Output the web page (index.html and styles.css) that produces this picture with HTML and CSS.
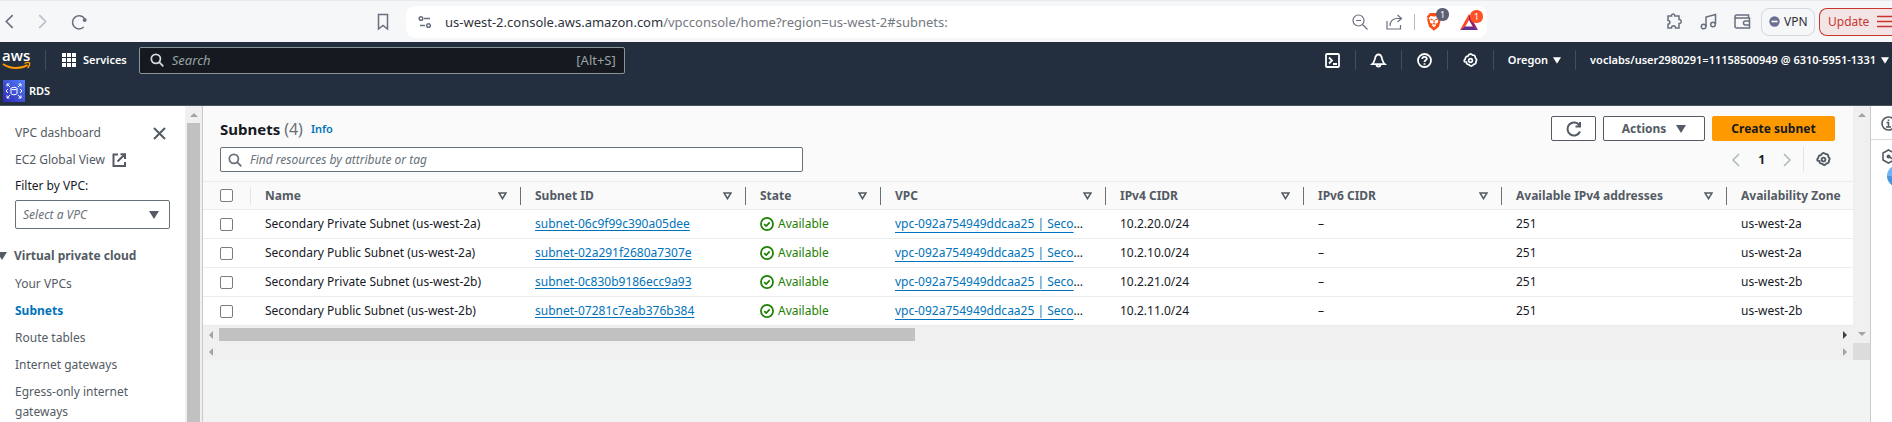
FILE: index.html
```html
<!DOCTYPE html>
<html lang="en">
<head>
<meta charset="utf-8">
<title>Subnets | VPC Console</title>
<link rel="stylesheet" href="styles.css">
</head>
<body>
<svg class="defs" aria-hidden="true">
  <symbol id="gear" viewBox="0 0 16 16"><path d="M6.600 1.600 8 1l1.400.6 1 .7 1.500.1 1 1.100.2 1.500 1 1.200.5 1.500-.8 1.400 0 1.500-1.100 1.200-1.400.4-.9 1-1.500.8-1.500-.7-1.100-.9-1.500-.3-1-1.100-.1-1.500L1.600 9.300 1.300 7.700 2.400 6.400l.3-1.500 1-1.200 1.500-.3z"/><circle cx="8" cy="8" r="2"/></symbol>
  <symbol id="caret" viewBox="0 0 10 8"><path d="M0 0h10L5 8z"/></symbol>
  <symbol id="sort" viewBox="0 0 10 9"><path d="M1.200 1.200h7.600L5 7.400z"/></symbol>
  <symbol id="ok" viewBox="0 0 16 16"><circle cx="8" cy="8" r="6.900"/><path d="m4.800 8.200 2.300 2.200 4-4.300"/></symbol>
  <symbol id="lens" viewBox="0 0 16 16"><circle cx="6.700" cy="6.700" r="5.200"/><path d="m10.500 10.500 4.700 4.700"/></symbol>
  <symbol id="chev-l" viewBox="0 0 8 14"><path d="M7 1 1 7l6 6"/></symbol>
  <symbol id="chev-r" viewBox="0 0 8 14"><path d="m1 1 6 6-6 6"/></symbol>
</svg>

<div class="browser">
  <button class="bare" aria-label="Back"><svg class="line b-nav" width="9" height="15"><use href="#chev-l"/></svg></button>
  <button class="bare" aria-label="Forward"><svg class="line b-nav dim" width="9" height="15"><use href="#chev-r"/></svg></button>
  <button class="bare" aria-label="Reload"><svg class="line" width="17" height="16" viewBox="0 0 17 16"><path d="M12.800 13a6.600 6.600 0 1 1 .5-8.800"/><circle class="dot" cx="13.700" cy="6" r="2"/></svg></button>
  <button class="bare bookmark" aria-label="Bookmark"><svg class="line" width="12" height="18" viewBox="0 0 12 18"><path d="M1.500 1.500h9v14.500L6 12.500 1.500 16z"/></svg></button>
  <div class="address">
    <svg class="line tune" width="14" height="14" viewBox="0 0 14 14"><circle cx="3" cy="3.500" r="1.800"/><path d="M6 3.500h6M2 10.500h5"/><circle cx="10.500" cy="10.500" r="1.800"/></svg>
    <span class="url">us-west-2.console.aws.amazon.com<span class="path">/vpcconsole/home?region=us-west-2#subnets:</span></span>
    <button class="bare" aria-label="Zoom out"><svg class="line thin" width="16" height="16" viewBox="0 0 16 16"><circle cx="6.500" cy="6.500" r="5.500"/><path d="m10.500 10.500 5 5M4 6.500h5"/></svg></button>
    <button class="bare share" aria-label="Share"><svg class="line thin" width="17" height="16" viewBox="0 0 17 16"><path d="M1 7v8h13.500v-4M4 12c0-5 3-7.500 7-7.500h4M11.500 1l4 3.500-4 3.500"/></svg></button>
    <span class="rule"></span>
    <button class="bare badged shield" aria-label="Brave Shields"><svg width="16" height="19" viewBox="0 0 16 19"><path fill="#fb4e14" d="M4 1h8l1.500 1.700 1.500 1.500-.5 2 .3 1.800-1.900 6.800L8 18.800l-4.900-4L1.200 8l.3-1.800-.5-2L2.500 2.700z"/><path fill="#fff" d="M4.500 4 8 4.600 11.500 4l1.700 2.300-1 2-.2 2.200-2 1.200-.2 2L8 15.200 6.200 13.700l-.2-2-2-1.200-.2-2.200-1-2z"/><path stroke="#fb4e14" stroke-width="1.200" fill="none" d="m4.500 7.200 2.200.6M11.500 7.200l-2.200.6M8 8v2.500M6.500 12.200 8 11.400l1.500.8"/></svg><span class="badge slate">1</span></button>
    <button class="bare badged rewards" aria-label="Brave Rewards"><svg width="18" height="16" viewBox="0 0 18 16"><path fill="#ff4724" d="M9 0 0 16l5-3L9 6z"/><path fill="#9e1f63" d="m9 0 9 16-5-3-4-7z"/><path fill="#662d91" d="M0 16h18l-5-3.500H5z"/></svg><span class="badge red">1</span></button>
  </div>
  <div class="extensions">
    <button class="bare" aria-label="Extensions"><svg class="line" width="17" height="17" viewBox="0 0 17 17"><path d="M2 3h3.500C5 1 8.500 0 8.800 3H13v3.500c3-.3 3 4.200 0 4V15H9.500c0-3-4-3-4 0H2v-3.800c2.600-.2 2.600-3.600 0-3.700z"/></svg></button>
    <button class="bare" aria-label="Media"><svg class="line" width="17" height="17" viewBox="0 0 17 17"><path d="M6 13.500V4l9.500-2.500V11"/><circle cx="3.600" cy="13.500" r="2.300"/><circle cx="13" cy="11.500" r="2.300"/></svg></button>
    <button class="bare" aria-label="Wallet"><svg class="line" width="17" height="15" viewBox="0 0 17 15"><path d="M14.500 4V1H2.500a1.500 1.500 0 0 0 0 3H15.500V14H3a1.800 1.800 0 0 1-2-2V2.500M15.500 7h-4a1.700 1.700 0 0 0 0 4h4"/></svg></button>
  </div>
  <button class="pill"><svg width="11" height="11" viewBox="0 0 11 11"><circle cx="5.500" cy="5.500" r="5.200" fill="#6b6f93"/><path d="M2.500 5.500h6" stroke="#fff" stroke-width="1.600"/></svg>VPN</button>
  <button class="pill update">Update<svg width="15" height="13" viewBox="0 0 15 13"><path d="M0 1.500h15M0 6.500h15M0 11.500h15" stroke="#c9362f" stroke-width="1.400"/></svg></button>
</div>

<header class="console">
  <nav class="topnav">
    <a class="logo" href="#" aria-label="AWS home"><svg width="30" height="22" viewBox="0 0 30 22"><text class="logo-word" x="0" y="12">aws</text><path d="M1 15c8 5.500 18 5 24.500 1" fill="none" stroke="#f90" stroke-width="2"/><path d="M22.500 14.300c2.500-1 4.500-1 5-.3.400.8-.3 3-1.800 5" fill="none" stroke="#f90" stroke-width="1.400"/></svg></a>
    <span class="sep"></span>
    <button class="bare services"><svg width="14" height="14" viewBox="0 0 14 14"><path fill="#fff" d="M0 0h4v4H0zM5 0h4v4H5zM10 0h4v4h-4zM0 5h4v4H0zM5 5h4v4H5zM10 5h4v4h-4zM0 10h4v4H0zM5 10h4v4H5zM10 10h4v4h-4z"/></svg>Services</button>
    <label class="search"><svg class="line" width="14" height="14"><use href="#lens"/></svg><input type="text" placeholder="Search" aria-label="Search"><kbd>[Alt+S]</kbd></label>
    <div class="tools">
      <button class="bare" aria-label="CloudShell"><svg class="line" width="15" height="15" viewBox="0 0 15 15"><rect x="1" y="1" width="13" height="13" rx="1"/><path d="m4 4.500 3 3-3 3M8 11h4"/></svg></button>
      <button class="bare" aria-label="Notifications"><svg class="line" width="15" height="15" viewBox="0 0 15 15"><path d="M1.200 11.200C3.500 9 3.500 7.500 4 5.500c.5-2.300 1.700-4 3.500-4s3 1.700 3.500 4c.5 2 .5 3.500 2.800 5.700zM5.500 11.500a2 2 0 0 0 4 0"/></svg></button>
      <button class="bare" aria-label="Help"><svg class="line" width="15" height="15" viewBox="0 0 15 15"><circle cx="7.500" cy="7.500" r="6.500"/><path d="M5.200 6c0-3 4.600-2.800 4.600-.2C9.800 7.500 7.500 7.200 7.500 9M7.500 10.200v1.600"/></svg></button>
      <button class="bare" aria-label="Settings"><svg class="line" width="15" height="15"><use href="#gear"/></svg></button>
      <button class="bare region">Oregon<svg class="solid" width="8" height="7"><use href="#caret"/></svg></button>
      <button class="bare account">voclabs/user2980291=11158500949 @ 6310-5951-1331<svg class="solid" width="8" height="7"><use href="#caret"/></svg></button>
    </div>
  </nav>
  <a class="favorite" href="#"><svg width="22" height="22" viewBox="0 0 22 22"><defs><linearGradient id="rds" x1="0" y1="1" x2="1" y2="0"><stop offset="0" stop-color="#2e27ad"/><stop offset="1" stop-color="#527fff"/></linearGradient></defs><path fill="url(#rds)" d="M0 0h22v22H0z"/><g fill="none" stroke="#fff"><path d="M7 7 4 4m0 2.500V4h2.500M15 7l3-3m-2.500 0H18v2.500M7 15l-3 3m0-2.500V18h2.500M15 15l3 3m0-2.500V18h-2.500M5 9l-2 2 2 2M17 9l2 2-2 2"/><ellipse cx="11" cy="8.500" rx="3" ry="1.200"/><path d="M8 8.500v5c0 1.600 6 1.600 6 0v-5"/></g></svg>RDS</a>
</header>

<div class="workspace">
  <aside class="sidebar">
    <div class="side-scroll">
      <div class="side-top">
        <a href="#">VPC dashboard</a>
        <button class="bare" aria-label="Close"><svg class="line" width="13" height="13" viewBox="0 0 13 13"><path d="m1 1 11 11M12 1 1 12"/></svg></button>
      </div>
      <a class="side-link" href="#">EC2 Global View<svg class="line" width="14" height="14" viewBox="0 0 14 14"><path d="M6 1.500H1.500V13H13V9M8.500 1.200H13V6M13 1.200 5.500 8.500"/></svg></a>
      <label class="filter-label" for="vpc">Filter by VPC:</label>
      <div class="select"><select id="vpc"><option>Select a VPC</option></select><svg class="solid" width="10" height="8"><use href="#caret"/></svg></div>
      <button class="bare section"><svg class="solid" width="10" height="8"><use href="#caret"/></svg>Virtual private cloud</button>
      <a class="side-link" href="#">Your VPCs</a>
      <a class="side-link current" href="#">Subnets</a>
      <a class="side-link" href="#">Route tables</a>
      <a class="side-link" href="#">Internet gateways</a>
      <a class="side-link" href="#">Egress-only internet gateways</a>
    </div>
    <div class="vbar"><i class="tri up"></i><i class="vthumb"></i></div>
  </aside>

  <main class="main">
    <div class="panel">
      <div class="panel-body">
        <div class="panel-head">
          <div class="head-row">
            <h1>Subnets <span class="count">(4)</span></h1><a class="info" href="#">Info</a>
            <div class="actions">
              <button class="btn" aria-label="Refresh"><svg class="line" width="16" height="16" viewBox="0 0 16 16"><path d="M14 10.500A6.500 6.500 0 1 1 13.500 4.500M14 1v4.500H9.500"/></svg></button>
              <button class="btn menu">Actions<svg class="solid" width="10" height="8"><use href="#caret"/></svg></button>
              <button class="btn primary">Create subnet</button>
            </div>
          </div>
          <div class="head-row">
            <label class="find"><svg class="line" width="14" height="14"><use href="#lens"/></svg><input type="text" placeholder="Find resources by attribute or tag" aria-label="Find resources by attribute or tag"></label>
            <div class="pager">
              <button class="bare" aria-label="Previous page"><svg class="line" width="8" height="14"><use href="#chev-l"/></svg></button>
              <b>1</b>
              <button class="bare" aria-label="Next page"><svg class="line" width="8" height="14"><use href="#chev-r"/></svg></button>
              <button class="bare prefs" aria-label="Preferences"><svg class="line" width="15" height="15"><use href="#gear"/></svg></button>
            </div>
          </div>
        </div>
        <table class="grid">
          <colgroup><col class="c-check"><col class="c-name"><col class="c-id"><col class="c-state"><col class="c-vpc"><col class="c-cidr"><col class="c-cidr"><col class="c-avail"><col></colgroup>
          <thead><tr>
            <th><input type="checkbox" aria-label="Select all"></th>
            <th><span>Name<svg class="line" width="9" height="8"><use href="#sort"/></svg></span></th>
            <th><span>Subnet ID<svg class="line" width="9" height="8"><use href="#sort"/></svg></span></th>
            <th><span>State<svg class="line" width="9" height="8"><use href="#sort"/></svg></span></th>
            <th><span>VPC<svg class="line" width="9" height="8"><use href="#sort"/></svg></span></th>
            <th><span>IPv4 CIDR<svg class="line" width="9" height="8"><use href="#sort"/></svg></span></th>
            <th><span>IPv6 CIDR<svg class="line" width="9" height="8"><use href="#sort"/></svg></span></th>
            <th><span>Available IPv4 addresses<svg class="line" width="9" height="8"><use href="#sort"/></svg></span></th>
            <th><span>Availability Zone</span></th>
          </tr></thead>
          <tbody>
            <tr><td><input type="checkbox" aria-label="Select row 1"></td><td>Secondary Private Subnet (us-west-2a)</td><td><a href="#">subnet-06c9f99c390a05dee</a></td><td><span class="state"><svg class="line" width="14" height="14"><use href="#ok"/></svg>Available</span></td><td><a class="vpc" href="#">vpc-092a754949ddcaa25 | Seco</a>…</td><td>10.2.20.0/24</td><td>–</td><td>251</td><td>us-west-2a</td></tr>
            <tr><td><input type="checkbox" aria-label="Select row 2"></td><td>Secondary Public Subnet (us-west-2a)</td><td><a href="#">subnet-02a291f2680a7307e</a></td><td><span class="state"><svg class="line" width="14" height="14"><use href="#ok"/></svg>Available</span></td><td><a class="vpc" href="#">vpc-092a754949ddcaa25 | Seco</a>…</td><td>10.2.10.0/24</td><td>–</td><td>251</td><td>us-west-2a</td></tr>
            <tr><td><input type="checkbox" aria-label="Select row 3"></td><td>Secondary Private Subnet (us-west-2b)</td><td><a href="#">subnet-0c830b9186ecc9a93</a></td><td><span class="state"><svg class="line" width="14" height="14"><use href="#ok"/></svg>Available</span></td><td><a class="vpc" href="#">vpc-092a754949ddcaa25 | Seco</a>…</td><td>10.2.21.0/24</td><td>–</td><td>251</td><td>us-west-2b</td></tr>
            <tr><td><input type="checkbox" aria-label="Select row 4"></td><td>Secondary Public Subnet (us-west-2b)</td><td><a href="#">subnet-07281c7eab376b384</a></td><td><span class="state"><svg class="line" width="14" height="14"><use href="#ok"/></svg>Available</span></td><td><a class="vpc" href="#">vpc-092a754949ddcaa25 | Seco</a>…</td><td>10.2.11.0/24</td><td>–</td><td>251</td><td>us-west-2b</td></tr>
          </tbody>
        </table>
        <div class="hbar"><i class="tri left"></i><span class="htrack"><i class="hthumb"></i></span><i class="tri right dark"></i></div>
      </div>
      <div class="vbar outer"><i class="tri up"></i><i class="tri down"></i></div>
    </div>
    <div class="bottom"><div class="hbar"><i class="tri left"></i><span class="htrack"></span><i class="tri right"></i></div><span class="corner"></span></div>
  </main>

  <aside class="help">
    <div class="help-top"><svg class="line" width="15" height="15" viewBox="0 0 15 15"><circle cx="7.500" cy="7.500" r="6.500"/><path d="M5.500 6.500h2v4.500M5 11h5M7.500 3.500v1.500"/></svg></div>
    <div class="help-body"><svg class="line" width="15" height="15" viewBox="0 0 15 15"><path d="M7.500 1 13 4v7l-5.500 3L2 11V4z"/><circle class="dot" cx="7.500" cy="7.500" r="2"/><path d="m7.500 7.500 5 3"/></svg><i class="bubble"></i></div>
  </aside>
</div>
</body>
</html>
```
FILE: styles.css
```css
* { box-sizing: border-box; }
body {
  margin: 0;
  height: 100vh;
  display: flex;
  flex-direction: column;
  overflow: hidden;
  font: 12px/20px "Noto Sans", "Open Sans", sans-serif;
  color: #16191f;
  background: #f2f3f3;
}
a { color: inherit; text-decoration: none; }
input, select, button, kbd { font: inherit; color: inherit; }
svg { flex: none; display: block; overflow: visible; }
.defs { position: absolute; width: 0; height: 0; }
.line { fill: none; stroke: currentColor; stroke-width: 2; }
.solid { fill: currentColor; }
.bare {
  display: flex;
  align-items: center;
  padding: 0;
  border: 0;
  background: none;
}

/* browser toolbar */
.browser {
  flex: none;
  display: flex;
  align-items: center;
  height: 42px;
  padding-left: 5px;
  border-top: 1px solid #e8eaed;
  background: #f5f7f9;
  color: #68707f;
  font-size: 13px;
}
.browser .bare { margin-right: 24px; }
.browser .line { stroke-width: 1.5; }
.browser .thin { stroke-width: 1.2; }
.browser .dim { color: #b9bec8; }
.dot { fill: currentColor; stroke: none; }
.browser .bookmark { margin: 0 17px 0 265px; }
.address {
  flex: 1;
  display: flex;
  align-items: center;
  height: 32px;
  padding: 0 9px 0 12px;
  border-radius: 9px;
  background: #fff;
}
.address .bare { margin-right: 18px; }
.address .bare:last-child { margin-right: 0; }
.url { flex: 1; margin-left: 13px; color: #30343c; }
.path { color: #757980; }
.address .share { margin-right: 11px; }
.rule { width: 1px; height: 16px; margin-right: 11px; background: #b5b8be; }
.badged { position: relative; }
.badge {
  position: absolute;
  top: -4px;
  left: 10px;
  width: 13px;
  height: 13px;
  border-radius: 6px;
  color: #fff;
  font-size: 9px;
  line-height: 13px;
  text-align: center;
}
.slate { background: #5e6175; }
.red { background: #ff5226; }
.extensions { display: flex; align-items: center; margin-left: 179px; }
.browser .extensions .bare { margin-right: 17px; }
.browser .extensions .bare:last-child { margin-right: 10px; }
.pill {
  display: flex;
  align-items: center;
  gap: 4px;
  width: 54px;
  height: 28px;
  padding: 0 0 0 7px;
  border: 1px solid #d3d7df;
  border-radius: 8px;
  background: #f5f7f9;
  color: #2b2f38;
  font-size: 12px;
}
.update {
  gap: 8px;
  width: 73px;
  margin-left: 4px;
  padding: 0 0 0 8px;
  border-color: #c9362f;
  border-right: 0;
  border-radius: 8px 0 0 8px;
  background: #f3e4e5;
  color: #c9362f;
}

/* console header */
.console {
  flex: none;
  height: 64px;
  border-bottom: 1px solid #4b5260;
  background: #232f3e;
  color: #fff;
  font-weight: 600;
  font-size: 11px;
}
.topnav { display: flex; align-items: center; height: 36px; }
.logo { margin: 0 13px 0 2px; }
.logo-word { fill: #fff; font: 600 15px "Open Sans", sans-serif; }
.sep { width: 1px; height: 20px; margin-right: 16px; background: #414d5c; }
.services { gap: 7px; }
.search {
  display: flex;
  align-items: center;
  flex: 0 1 486px;
  height: 27px;
  margin-left: 12px;
  padding: 0 8px 0 10px;
  border: 1px solid #879596;
  border-radius: 2px;
  background: #16191f;
  color: #d5dbdb;
  font-weight: 400;
  font-size: 13px;
}
.search input, .find input {
  flex: 1;
  min-width: 0;
  margin-left: 8px;
  padding: 0;
  border: 0;
  outline: 0;
  background: none;
}
.search input::placeholder { color: #95a5a6; font-style: italic; opacity: 1; }
.search kbd { color: #95a5a6; }
.tools { display: flex; align-items: center; margin-left: auto; padding-right: 3px; }
.tools .bare { height: 20px; padding: 0 15px; }
.tools .bare + .bare { border-left: 1px solid #414d5c; }
.tools .line { stroke-width: 1.8; }
.region, .account { gap: 5px; }
.tools .region { padding: 0 14px; }
.tools .account { padding: 0 0 0 14px; }
.favorite { display: flex; align-items: center; gap: 4px; margin-left: 3px; height: 26px; }

/* page body */
.workspace { flex: 1; display: flex; min-height: 0; }
.sidebar {
  flex: none;
  display: flex;
  width: 203px;
  border-right: 1px solid #c9cbcb;
  background: #fff;
  color: #545b64;
}
.side-scroll { flex: 1; padding: 17px 15px 0; overflow: hidden; }
.side-top { display: flex; justify-content: space-between; padding-right: 4px; margin-bottom: 7px; }
.side-link { display: flex; align-items: center; gap: 7px; margin-bottom: 7px; }
.current { color: #0073bb; font-weight: 700; }
.filter-label { display: block; color: #16191f; margin: -1px 0 4px; }
.select { display: flex; align-items: center; height: 29px; padding-right: 10px; border: 1px solid #687078; border-radius: 2px; }
.select select { flex: 1; height: 27px; padding: 0 0 0 7px; border: 0; background: none; color: #687078; font-style: italic; appearance: none; outline: 0; }
.section { gap: 7px; margin: 17px 0 8px -18px; font-weight: 700; white-space: nowrap; }
.vbar { display: flex; flex-direction: column; align-items: center; width: 17px; padding-top: 7px; background: #f0f0f0; }
.vthumb { flex: 1; width: 13px; margin-top: 6px; background: #c1c1c1; }
.outer { justify-content: space-between; padding-bottom: 7px; }
.tri { width: 0; height: 0; border: 4px solid transparent; color: #a3a3a3; }
.up { border-top: 0; border-bottom-color: currentColor; }
.down { border-bottom: 0; border-top-color: currentColor; }
.left { border-left: 0; border-right-color: currentColor; }
.right { border-right: 0; border-left-color: currentColor; }
.tri.dark { color: #404040; }

.main { flex: 1; min-width: 0; }
.panel { display: flex; }
.panel-body { flex: 1; min-width: 0; background: #fafafa; }
.panel-head { display: flex; flex-direction: column; gap: 6px; padding: 10px 18px 9px 17px; }
.head-row { display: flex; align-items: center; height: 25px; }
h1 { margin: 0; font-size: 15px; line-height: 24px; font-weight: 700; }
.count { color: #687078; font-size: 16px; font-weight: 400; }
.info { margin-left: 8px; color: #0073bb; font-size: 11px; font-weight: 600; }
.actions { display: flex; gap: 7px; margin-left: auto; }
.btn {
  display: flex;
  align-items: center;
  justify-content: center;
  gap: 10px;
  width: 45px;
  height: 25px;
  padding: 0;
  border: 1px solid #545b64;
  border-radius: 2px;
  background: #fff;
  color: #545b64;
  font-weight: 700;
}
.menu { width: 102px; }
.primary { width: 123px; border-color: #f90; background: #f90; color: #16191f; }
.find {
  display: flex;
  align-items: center;
  flex: 0 1 583px;
  height: 25px;
  padding: 0 7px;
  border: 1px solid #687078;
  border-radius: 2px;
  background: #fff;
  color: #687078;
}
.find input::placeholder { color: #687078; font-style: italic; opacity: 1; }
.pager { display: flex; align-items: center; margin-left: auto; padding-right: 4px; }
.pager .line { color: #aab7b8; stroke-width: 1.5; }
.pager b { margin: 0 18px; }
.prefs { height: 25px; margin-left: 12px; padding-left: 12px; border-left: 1px solid #e4e6e6; }
.pager .prefs .line { color: #545b64; stroke-width: 2; }

.grid { width: 100%; table-layout: fixed; border-collapse: separate; border-spacing: 0; white-space: nowrap; }
.c-check { width: 47px; }
.c-name { width: 270px; }
.c-id, .c-vpc, .c-avail { width: 225px; }
.c-state { width: 135px; }
.c-cidr { width: 198px; }
.grid th { height: 29px; padding: 0; border-top: 1px solid #eaeded; border-bottom: 1px solid #eaeded; color: #545b64; text-align: left; }
.grid th span { display: flex; align-items: center; justify-content: space-between; height: 18px; padding: 0 13px 0 14px; border-left: 1px solid #687078; }
.grid th:nth-child(2) span { border-color: #e4e6e6; }
.grid th .line { stroke-width: 1.8; }
.grid td { height: 29px; padding: 0 0 0 15px; border-bottom: 1px solid #eaeded; background: #fff; overflow: hidden; }
.grid th:first-child, .grid td:first-child { padding-left: 17px; }
.grid td a { color: #0073bb; text-decoration: underline; text-decoration-skip-ink: none; text-underline-offset: 2px; }
.grid td .vpc { text-underline-offset: 4px; }
.grid input { display: block; appearance: none; width: 13px; height: 13px; margin: 0; border: 1px solid #767d84; border-radius: 2px; background: #fff; }
.state { display: flex; align-items: center; gap: 4px; color: #1d8102; }

.hbar { flex: 1; display: flex; align-items: center; height: 17px; padding: 0 6px; background: #f0f0f0; }
.htrack { flex: 1; height: 13px; margin: 0 6px; }
.hthumb { display: block; width: 43%; height: 13px; background: #c1c1c1; }
.bottom { display: flex; }
.corner { width: 17px; background: #dcdcdc; }

.help { flex: none; width: 22px; overflow: hidden; border-left: 1px solid #c9cbcb; background: #fff; color: #545b64; }
.help .line { stroke-width: 1.6; }
.help-top { height: 34px; padding: 10px 0 0 10px; border-bottom: 1px solid #d5dbdb; }
.help-body { position: relative; padding: 9px 0 0 10px; }
.bubble { position: absolute; top: 25px; left: 16px; width: 22px; height: 22px; border-radius: 50%; background: linear-gradient(#6cb5f9 50%, #4a94e0 50%); }
```
